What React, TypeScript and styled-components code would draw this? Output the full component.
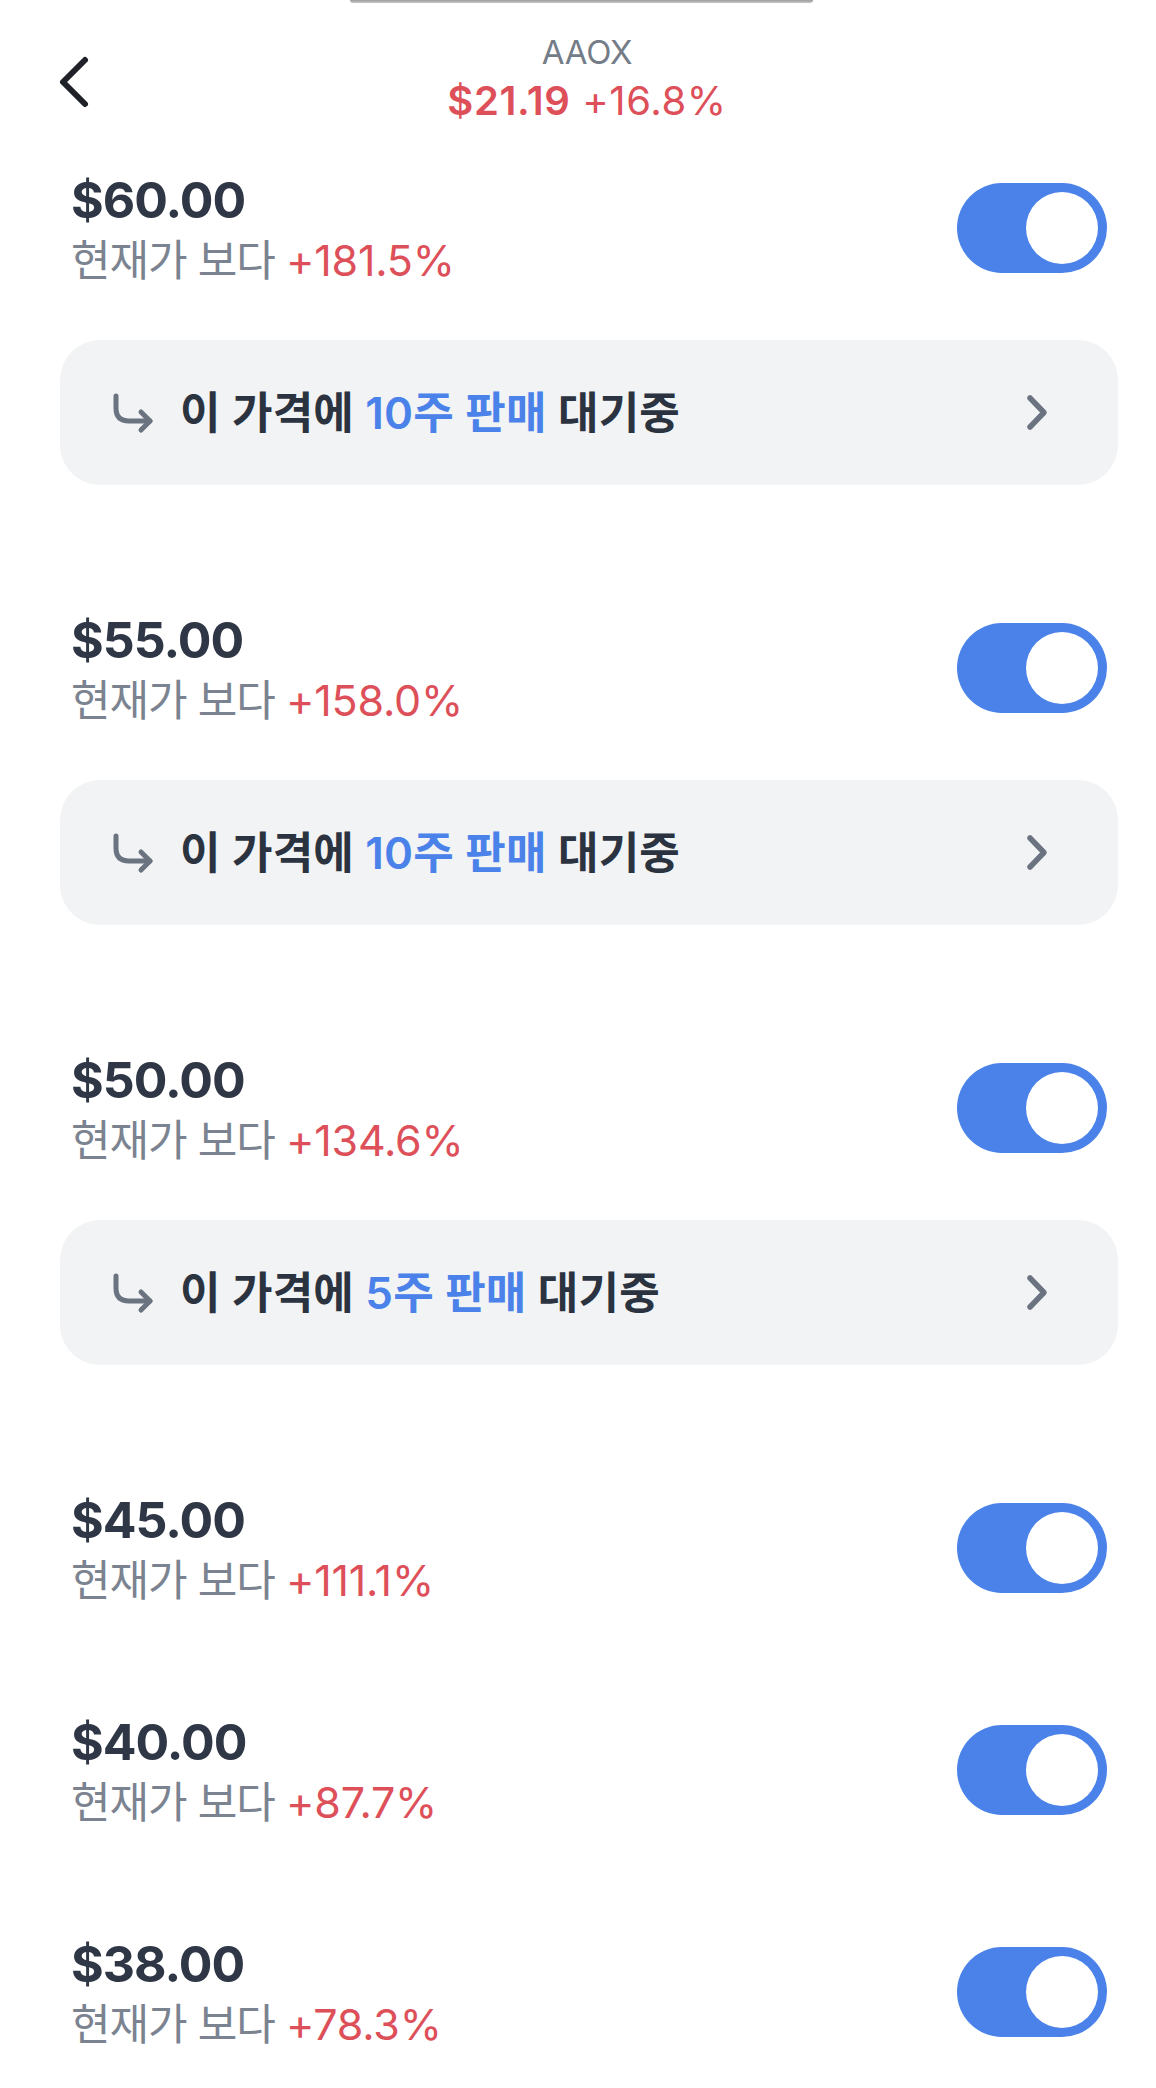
import React from "react";
import styled, { createGlobalStyle } from "styled-components";

const GlobalStyle = createGlobalStyle`
  html, body {
    margin: 0;
    padding: 0;
    background: #ffffff;
  }
  body {
    font-family: Inter, "Noto Sans CJK KR", "Noto Sans", sans-serif;
    -webkit-font-smoothing: antialiased;
  }
  * { box-sizing: border-box; }
`;

const Page = styled.div`
  width: 1156px;
  display: flex;
  flex-direction: column;
  background: #ffffff;
`;

const TopEdge = styled.div`
  width: 463px;
  height: 3px;
  margin-left: 350px;
  border-radius: 0 0 4px 4px;
  background: linear-gradient(180deg, #9c9c9c 0%, #c8c8c8 100%);
`;

const Header = styled.header`
  height: 160px;
  display: grid;
  grid-template-columns: 1fr auto 1fr;
  align-items: start;
  padding: 0 38px 0 56px;
`;

const BackButton = styled.button`
  margin-top: 49px;
  width: 36px;
  height: 60px;
  padding: 0;
  border: none;
  background: transparent;
  display: flex;
  justify-self: start;
  cursor: pointer;
`;

const TitleBlock = styled.div`
  padding-top: 29px;
  display: flex;
  flex-direction: column;
  align-items: center;
`;

const Ticker = styled.div`
  font-size: 33px;
  line-height: 40px;
  font-weight: 400;
  color: #747c88;
  letter-spacing: -0.2px;
`;

const Quote = styled.div`
  margin-top: 6px;
  font-size: 40px;
  line-height: 46px;
  color: #dd4f59;
  white-space: nowrap;
  letter-spacing: 0.6px;
`;

const QuotePrice = styled.span`
  font-weight: 600;
`;

const QuoteChange = styled.span`
  font-weight: 400;
`;

const List = styled.div`
  display: flex;
  flex-direction: column;
`;

const Item = styled.section<{ $withCard: boolean }>`
  display: flex;
  flex-direction: column;
  padding-bottom: ${(p) => (p.$withCard ? 118 : 92)}px;
`;

const Row = styled.div`
  height: 130px;
  display: flex;
  align-items: center;
  justify-content: space-between;
  padding: 0 49px 0 71px;
`;

const PriceInfo = styled.div`
  display: flex;
  flex-direction: column;
`;

const Price = styled.div`
  font-size: 50px;
  line-height: 56px;
  font-weight: 700;
  color: #2f3746;
  letter-spacing: -1px;
`;

const Sub = styled.div`
  margin-top: 7px;
  font-size: 43px;
  line-height: 50px;
  font-weight: 400;
  color: #7b8391;
  letter-spacing: -1px;
  white-space: nowrap;
`;

const Up = styled.span`
  color: #dd4f59;
  letter-spacing: -0.2px;
`;

const Toggle = styled.button`
  width: 150px;
  height: 90px;
  padding: 9px;
  border: none;
  border-radius: 45px;
  background: #4a82ea;
  display: flex;
  justify-content: flex-end;
  align-items: center;
  cursor: pointer;
`;

const Knob = styled.span`
  width: 72px;
  height: 72px;
  border-radius: 50%;
  background: #ffffff;
`;

const Card = styled.div`
  margin: 47px 38px 0 60px;
  height: 145px;
  border-radius: 40px;
  background: #f2f3f5;
  display: flex;
  align-items: center;
  padding: 0 66px 0 50px;
`;

const CardText = styled.div`
  flex: 1;
  margin-left: 24px;
  font-size: 44px;
  line-height: 52px;
  font-weight: 600;
  color: #2b3340;
  letter-spacing: 0.2px;
  white-space: nowrap;
`;

const Accent = styled.span`
  color: #4a82ea;
`;

const IconSvg = styled.svg`
  display: block;
  flex-shrink: 0;
`;

type Level = {
  price: string;
  change: string;
  shares?: string;
};

const levels: Level[] = [
  { price: "$60.00", change: "+181.5%", shares: "10주" },
  { price: "$55.00", change: "+158.0%", shares: "10주" },
  { price: "$50.00", change: "+134.6%", shares: "5주" },
  { price: "$45.00", change: "+111.1%" },
  { price: "$40.00", change: "+87.7%" },
  { price: "$38.00", change: "+78.3%" },
];

const BackIcon = () => (
  <IconSvg width="36" height="60" viewBox="0 0 36 60">
    <path
      d="M29 8 L7 30 L29 52"
      fill="none"
      stroke="#1e2228"
      strokeWidth="6"
      strokeLinecap="round"
      strokeLinejoin="round"
    />
  </IconSvg>
);

const ReplyArrow = () => (
  <IconSvg width="46" height="44" viewBox="0 0 46 44">
    <path
      d="M6 5 V17 Q6 30 19 30 H40"
      fill="none"
      stroke="#6b7380"
      strokeWidth="5"
      strokeLinecap="round"
      strokeLinejoin="round"
    />
    <path
      d="M31 21 L40 30 L31 39"
      fill="none"
      stroke="#6b7380"
      strokeWidth="5"
      strokeLinecap="round"
      strokeLinejoin="round"
    />
  </IconSvg>
);

const ChevronRight = () => (
  <IconSvg width="30" height="45" viewBox="0 0 30 45">
    <path
      d="M8 8 L22 22.5 L8 37"
      fill="none"
      stroke="#6b7380"
      strokeWidth="5.5"
      strokeLinecap="round"
      strokeLinejoin="round"
    />
  </IconSvg>
);

export default function App() {
  return (
    <Page>
      <GlobalStyle />
      <TopEdge />
      <Header>
        <BackButton aria-label="뒤로">
          <BackIcon />
        </BackButton>
        <TitleBlock>
          <Ticker>AAOX</Ticker>
          <Quote>
            <QuotePrice>$21.19</QuotePrice> <QuoteChange>+16.8%</QuoteChange>
          </Quote>
        </TitleBlock>
        <div />
      </Header>
      <List>
        {levels.map((lv) => (
          <Item key={lv.price} $withCard={!!lv.shares}>
            <Row>
              <PriceInfo>
                <Price>{lv.price}</Price>
                <Sub>
                  현재가 보다 <Up>{lv.change}</Up>
                </Sub>
              </PriceInfo>
              <Toggle aria-label="알림 켜짐">
                <Knob />
              </Toggle>
            </Row>
            {lv.shares && (
              <Card>
                <ReplyArrow />
                <CardText>
                  이 가격에 <Accent>{lv.shares} 판매</Accent> 대기중
                </CardText>
                <ChevronRight />
              </Card>
            )}
          </Item>
        ))}
      </List>
    </Page>
  );
}
